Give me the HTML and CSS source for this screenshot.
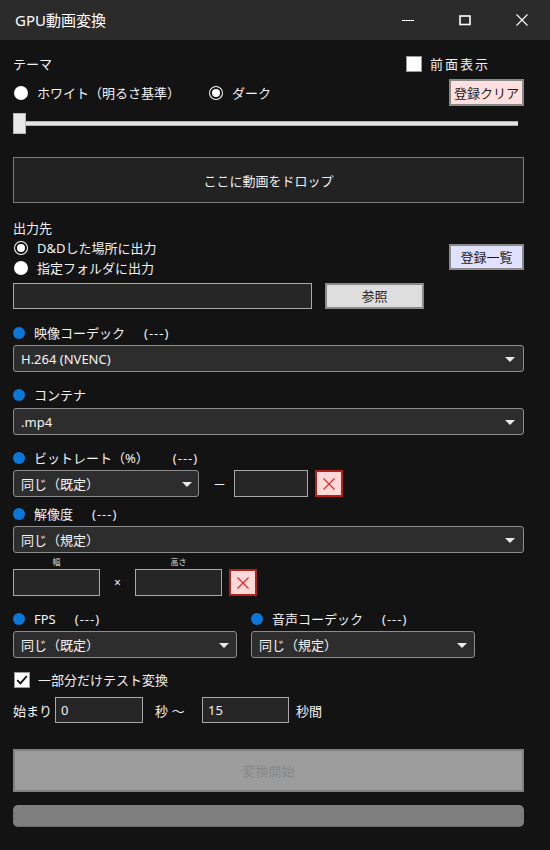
FILE: index.html
```html
<!DOCTYPE html>
<html lang="ja">
<head>
<meta charset="utf-8">
<title>GPU動画変換</title>
<link rel="stylesheet" href="styles.css">
</head>
<body>
<div class="window">
  <header class="titlebar">
    <span class="title">GPU動画変換</span>
    <div class="caption-buttons">
      <span class="cap-btn"><svg width="14" height="14" viewBox="0 0 14 14"><line x1="1" y1="7.5" x2="13" y2="7.5" stroke="#fff" stroke-width="1"/></svg></span>
      <span class="cap-btn"><svg width="14" height="14" viewBox="0 0 14 14"><rect x="2" y="3" width="10" height="8.5" fill="none" stroke="#fff" stroke-width="1.6"/></svg></span>
      <span class="cap-btn"><svg width="14" height="14" viewBox="0 0 14 14"><path d="M1.5 1.5 L12.5 12.5 M12.5 1.5 L1.5 12.5" stroke="#fff" stroke-width="1.1"/></svg></span>
    </div>
  </header>

  <main class="content">
    <div class="row theme-head">
      <span>テーマ</span>
      <label class="check topmost"><span class="box"></span><span class="spaced">前面表示</span></label>
    </div>

    <div class="row theme-row">
      <label class="radio"><span class="dot"></span>ホワイト（明るさ基準）</label>
      <label class="radio second"><span class="dot on"></span>ダーク</label>
      <button class="btn pink">登録クリア</button>
    </div>

    <div class="slider">
      <span class="thumb"></span>
      <span class="track"></span>
    </div>

    <div class="drop">ここに動画をドロップ</div>

    <div class="row label-row out-label">出力先</div>
    <div class="out-block">
      <div class="out-radios">
        <label class="radio line"><span class="dot on"></span>D&amp;Dした場所に出力</label>
        <label class="radio line"><span class="dot"></span>指定フォルダに出力</label>
      </div>
      <button class="btn lavender">登録一覧</button>
    </div>
    <div class="row path-row">
      <span class="textbox path"></span>
      <button class="btn gray browse">参照</button>
    </div>

    <div class="row label-row sec1"><span class="bullet"></span>映像コーデック<span class="na">(---)</span></div>
    <div class="combo wide c1"><span>H.264 (NVENC)</span><span class="arrow"></span></div>

    <div class="row label-row sec2"><span class="bullet"></span>コンテナ</div>
    <div class="combo wide c2"><span>.mp4</span><span class="arrow"></span></div>

    <div class="row label-row sec2"><span class="bullet"></span>ビットレート（%）<span class="na wide-na">(---)</span></div>
    <div class="row bitrate-row">
      <div class="combo small"><span>同じ（既定）</span><span class="arrow"></span></div>
      <span class="dash">－</span>
      <span class="textbox bitbox"></span>
      <span class="xbtn"><svg width="14" height="14" viewBox="0 0 14 14"><path d="M1.5 1.5 L12.5 12.5 M12.5 1.5 L1.5 12.5" stroke="#e02a2a" stroke-width="1.2"/></svg></span>
    </div>

    <div class="row label-row sec3"><span class="bullet"></span>解像度<span class="na">(---)</span></div>
    <div class="combo wide c1"><span>同じ（規定）</span><span class="arrow"></span></div>
    <div class="row tiny-row">
      <span class="tiny">幅</span>
      <span class="spacer"></span>
      <span class="tiny">高さ</span>
    </div>
    <div class="row res-row">
      <span class="textbox resbox"></span>
      <span class="times">×</span>
      <span class="textbox resbox"></span>
      <span class="xbtn"><svg width="14" height="14" viewBox="0 0 14 14"><path d="M1.5 1.5 L12.5 12.5 M12.5 1.5 L1.5 12.5" stroke="#e02a2a" stroke-width="1.2"/></svg></span>
    </div>

    <div class="pair">
      <div class="col">
        <div class="row label-row"><span class="bullet"></span>FPS<span class="na">(---)</span></div>
        <div class="combo half"><span>同じ（既定）</span><span class="arrow"></span></div>
      </div>
      <div class="col">
        <div class="row label-row"><span class="bullet"></span>音声コーデック<span class="na">(---)</span></div>
        <div class="combo half"><span>同じ（規定）</span><span class="arrow"></span></div>
      </div>
    </div>

    <div class="row test-row">
      <label class="check"><span class="box checked"><svg width="14" height="14" viewBox="0 0 14 14"><path d="M2.2 7.2 L5.4 10.4 L11.8 3.2" fill="none" stroke="#111" stroke-width="1.8"/></svg></span>一部分だけテスト変換</label>
    </div>
    <div class="row range-row">
      <span class="start-label">始まり</span>
      <span class="textbox numbox">0</span>
      <span class="sep">秒 ～</span>
      <span class="textbox numbox2">15</span>
      <span class="unit">秒間</span>
    </div>

    <button class="start">変換開始</button>
    <div class="progress"></div>
  </main>
</div>
</body>
</html>
```

FILE: styles.css
```css
* { box-sizing: border-box; }

html, body {
  margin: 0;
  padding: 0;
  background: #131313;
}

body {
  font-family: "Noto Sans", "Noto Sans CJK JP", sans-serif;
  font-size: 13px;
  color: #f2f2f2;
  width: 550px;
  height: 850px;
  overflow: hidden;
}

.titlebar {
  height: 40px;
  background: #2b2b2b;
  display: flex;
  align-items: center;
}

.title {
  font-size: 15px;
  color: #fff;
  margin-left: 15px;
  flex: 1;
  line-height: 20px;
}

.caption-buttons {
  display: flex;
  height: 40px;
}

.cap-btn {
  width: 57px;
  height: 40px;
  display: flex;
  align-items: center;
  justify-content: center;
}

.content {
  padding: 0 26px 0 13px;
}

.row {
  display: flex;
  align-items: center;
}

.theme-head {
  margin-top: 12px;
  height: 24px;
  line-height: 20px;
}

.check {
  display: flex;
  align-items: center;
  line-height: 20px;
}

.topmost {
  margin-left: auto;
  margin-right: 34px;
}

.spaced {
  letter-spacing: 2px;
}

.box {
  width: 16px;
  height: 16px;
  background: #fff;
  border: 1px solid #9a9a9a;
  margin-right: 8px;
  display: flex;
  align-items: center;
  justify-content: center;
}

.box.checked {
  margin-left: 1px;
  margin-right: 8px;
}

.theme-row {
  margin-top: 3px;
  height: 27px;
}

.radio {
  display: flex;
  align-items: center;
  line-height: 20px;
}

.radio .dot {
  width: 14px;
  height: 14px;
  border-radius: 50%;
  background: #fff;
  margin-left: 1px;
  margin-right: 9px;
  display: flex;
  align-items: center;
  justify-content: center;
}

.radio .dot.on::before {
  content: "";
  width: 8px;
  height: 8px;
  border-radius: 50%;
  background: #fff;
  border: 2.5px solid #111;
}

.radio.second {
  margin-left: 28px;
}

.btn {
  font-family: inherit;
  font-size: 13px;
  color: #1a1a1a;
  padding: 0;
  line-height: 20px;
}

.pink {
  margin-left: auto;
  width: 75px;
  height: 27px;
  background: #ffe0e0;
  border: 2px solid #8a8a8a;
}

.slider {
  margin-top: 7px;
  height: 21px;
  margin-right: 6px;
  display: flex;
  align-items: center;
}

.thumb {
  width: 13px;
  height: 21px;
  background: #e8e8e8;
  border: 1px solid #b5b5b5;
}

.track {
  flex: 1;
  height: 5px;
  background: #e4e4e4;
  border-top: 1px solid #b0b0b0;
  border-bottom: 1px solid #b0b0b0;
}

.drop {
  margin-top: 23px;
  height: 46px;
  background: #222;
  border: 1px solid #7a7a7a;
  display: flex;
  align-items: center;
  justify-content: center;
  color: #f0f0f0;
}

.label-row {
  height: 20px;
  line-height: 20px;
}

.out-label {
  margin-top: 15px;
}

.out-block {
  display: flex;
  align-items: flex-start;
}

.out-radios {
  display: flex;
  flex-direction: column;
}

.radio.line {
  height: 20px;
}

.lavender {
  margin-left: auto;
  margin-top: 6px;
  width: 75px;
  height: 26px;
  background: #e0e0ff;
  border: 2px solid #8a8a8a;
}

.path-row {
  margin-top: 5px;
  height: 26px;
}

.textbox {
  display: block;
  height: 27px;
  background: #262626;
  border: 1px solid #a8a8a8;
  color: #f2f2f2;
  line-height: 24px;
  padding-left: 5px;
}

.textbox.path {
  width: 299px;
  height: 26px;
}

.gray {
  width: 99px;
  height: 26px;
  margin-left: 13px;
  background: #dedede;
  border: 2px solid #8a8a8a;
}

.bullet {
  width: 12px;
  height: 12px;
  border-radius: 50%;
  background: #0a78d8;
  margin-right: 9px;
  flex: none;
}

.na {
  margin-left: 19px;
  letter-spacing: 1px;
}

.wide-na {
  margin-left: 24px;
}

.sec1 { margin-top: 14px; }
.sec2 { margin-top: 13px; }
.sec3 { margin-top: 7px; }

.combo {
  height: 27px;
  background: #2d2d2d;
  border: 1px solid #8c8c8c;
  border-radius: 3px;
  display: flex;
  align-items: center;
  justify-content: space-between;
  padding: 0 8px 0 7px;
  line-height: 20px;
  color: #f4f4f4;
}

.combo.c1 { margin-top: 2px; }
.combo.c2 { margin-top: 3px; }

.arrow {
  width: 0;
  height: 0;
  border-left: 5px solid transparent;
  border-right: 5px solid transparent;
  border-top: 5px solid #eaeaea;
  margin-top: 1px;
}

.bitrate-row {
  margin-top: 2px;
  height: 27px;
}

.combo.small {
  width: 186px;
  padding-right: 6px;
}

.dash {
  width: 35px;
  padding-left: 6px;
  text-align: center;
}

.bitbox {
  width: 74px;
}

.xbtn {
  width: 28px;
  height: 27px;
  margin-left: 7px;
  background: #ffd8d8;
  border: 2px solid #b41f1f;
  display: flex;
  align-items: center;
  justify-content: center;
}

.tiny-row {
  margin-top: 3px;
  height: 12px;
}

.tiny {
  width: 87px;
  text-align: center;
  font-size: 8px;
  line-height: 12px;
  color: #dcdcdc;
}

.spacer {
  width: 35px;
}

.res-row {
  margin-top: 1px;
  height: 27px;
}

.resbox {
  width: 87px;
}

.times {
  width: 35px;
  text-align: center;
  font-size: 12px;
}

.pair {
  display: grid;
  grid-template-columns: 224px 224px;
  column-gap: 14px;
  margin-top: 13px;
}

.combo.half {
  margin-top: 2px;
  padding-right: 7px;
}

.test-row {
  margin-top: 12px;
  height: 20px;
}

.range-row {
  margin-top: 7px;
  height: 26px;
}

.start-label {
  width: 42px;
}

.numbox {
  width: 88px;
  height: 26px;
}

.sep {
  width: 59px;
  padding-left: 12px;
}

.numbox2 {
  width: 87px;
  height: 26px;
}

.unit {
  padding-left: 7px;
}

.start {
  display: flex;
  align-items: center;
  justify-content: center;
  width: 100%;
  margin-top: 26px;
  height: 43px;
  background: #9c9c9c;
  border: 2px solid #808080;
  color: #888;
  font-family: inherit;
  font-size: 13px;
  padding: 0;
}

.progress {
  margin-top: 13px;
  height: 22px;
  background: #7e7e7e;
  border-radius: 5px;
  border-bottom: 1px solid #6c6c6c;
}
```
